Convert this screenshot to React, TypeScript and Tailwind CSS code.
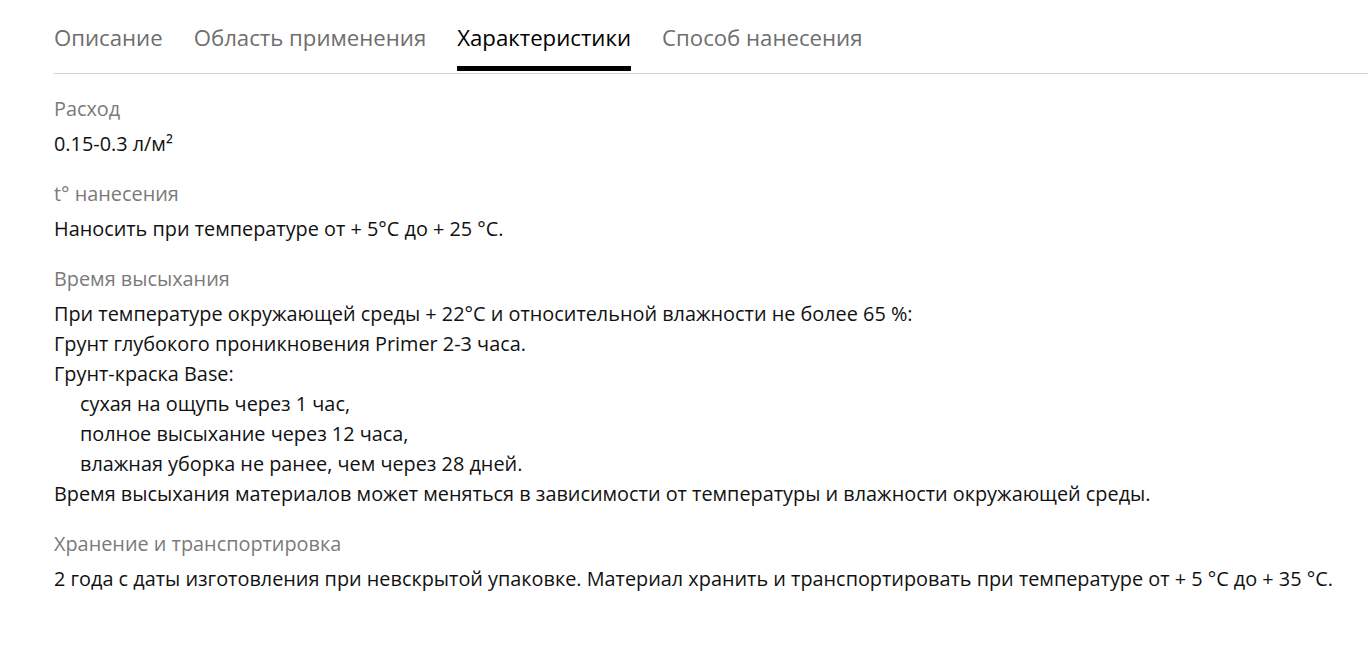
const tabs = ['Описание', 'Область применения', 'Характеристики', 'Способ нанесения'];

const Spec = ({ label, children }: { label: string; children: React.ReactNode }) => (
  <div className="mb-[20px]">
    <div className="text-[19.85px] leading-[30px] text-[#7a7a7a]">{label}</div>
    <div className="mt-[5px] text-[19.85px] leading-[30px] text-[#111]">{children}</div>
  </div>
);

export default function App() {
  const active = 'Характеристики';

  return (
    <div className="min-h-[650px] bg-white pl-[54px] pt-[22px]" style={{ fontFamily: '"Open Sans", sans-serif' }}>
      <div className="flex gap-[31px] border-b border-[#d4d4d4] pb-[2px]">
        {tabs.map((t) => (
          <div
            key={t}
            className={
              t === active
                ? 'border-b-[5px] border-black pb-[13px] text-[22.2px] leading-[31px] text-black'
                : 'border-b-[5px] border-transparent pb-[13px] text-[22.2px] leading-[31px] text-[#6e6e6e]'
            }
          >
            {t}
          </div>
        ))}
      </div>

      <div className="pt-[20px]">
        <Spec label="Расход">0.15-0.3 л/м²</Spec>
        <Spec label="t° нанесения">Наносить при температуре от + 5°С до + 25 °С.</Spec>
        <Spec label="Время высыхания">
          <div>При температуре окружающей среды + 22°С и относительной влажности не более 65 %:</div>
          <div>Грунт глубокого проникновения Primer 2-3 часа.</div>
          <div>Грунт-краска Base:</div>
          <div className="pl-[26px]">
            <div>сухая на ощупь через 1 час,</div>
            <div>полное высыхание через 12 часа,</div>
            <div>влажная уборка не ранее, чем через 28 дней.</div>
          </div>
          <div>Время высыхания материалов может меняться в зависимости от температуры и влажности окружающей среды.</div>
        </Spec>
        <Spec label="Хранение и транспортировка">
          2 года с даты изготовления при невскрытой упаковке. Материал хранить и транспортировать при температуре от + 5 °С до + 35 °С.
        </Spec>
      </div>
    </div>
  );
}
